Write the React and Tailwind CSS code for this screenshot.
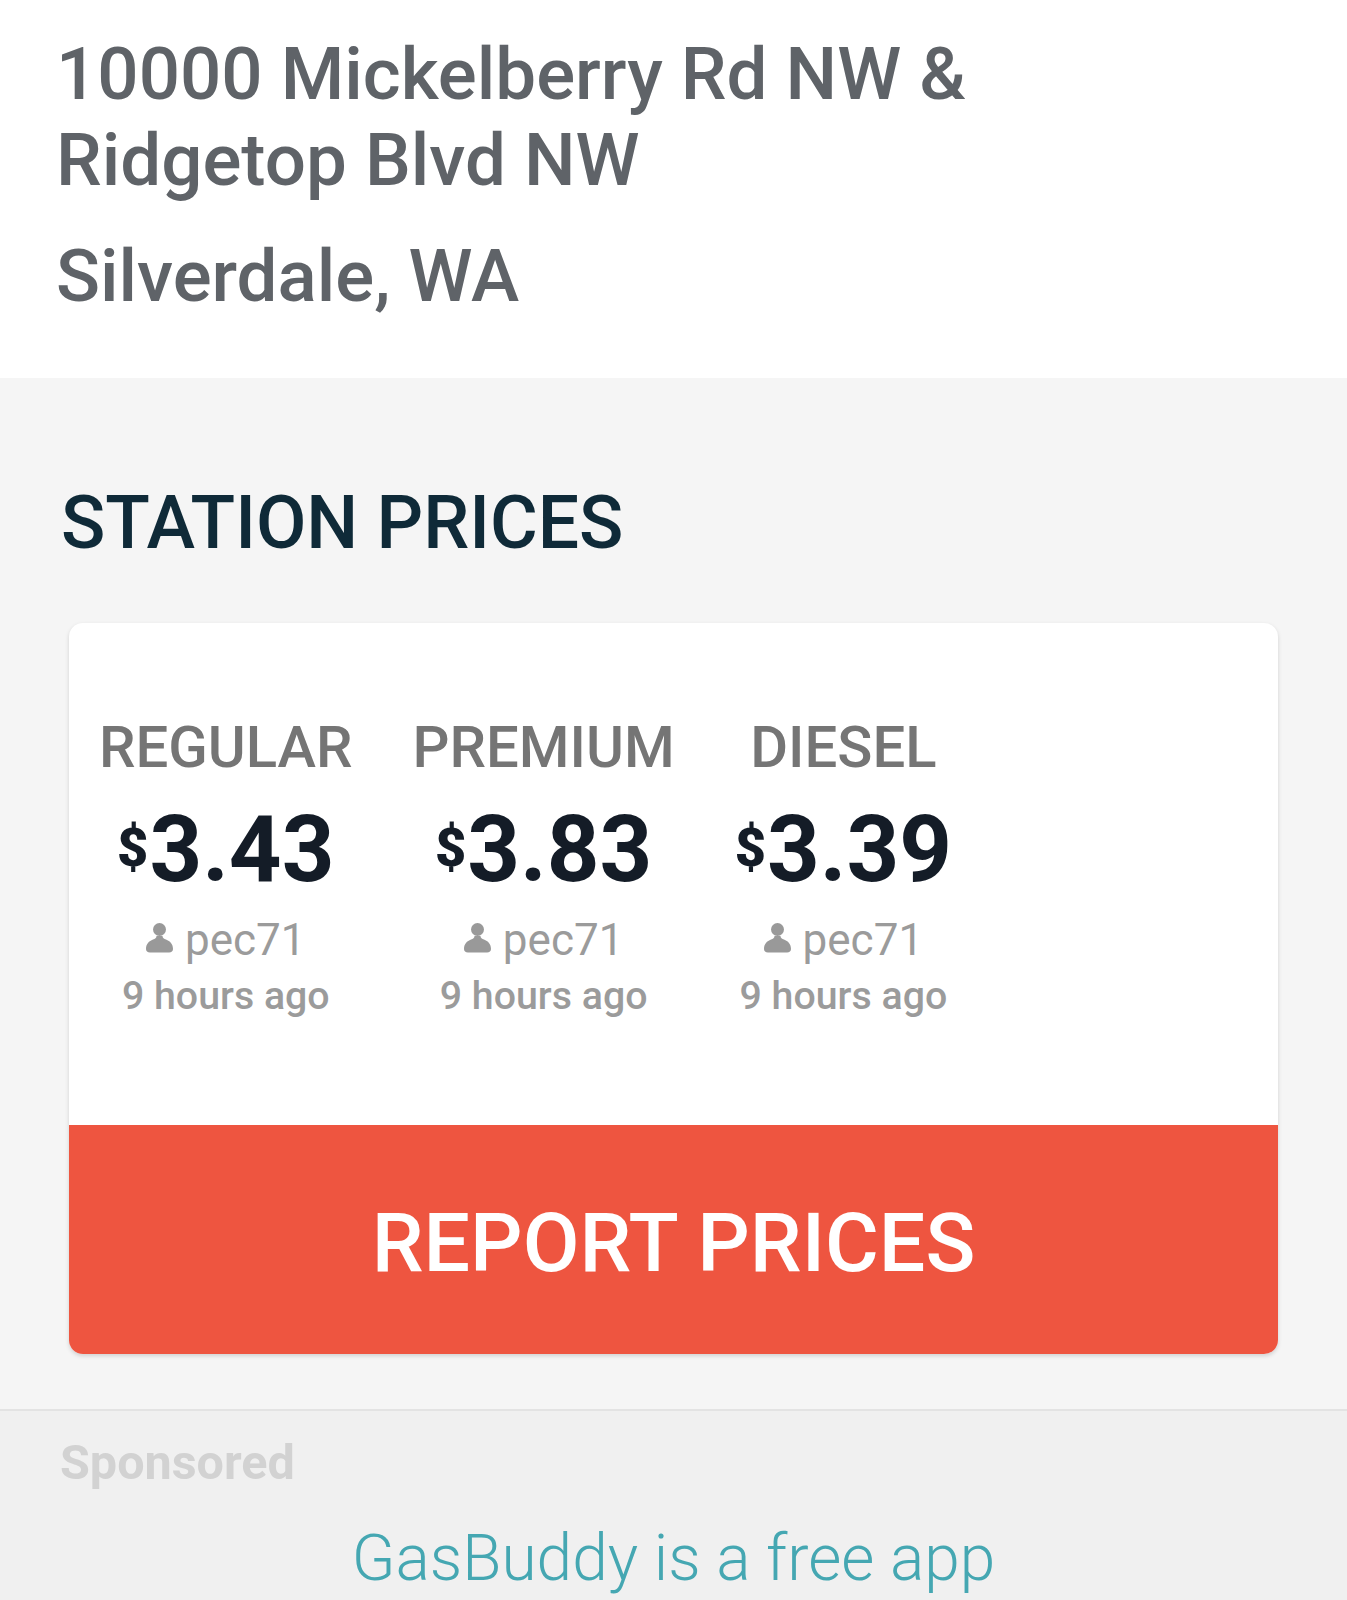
import React from 'react';

const prices = [
  { grade: 'REGULAR', price: '3.43' },
  { grade: 'PREMIUM', price: '3.83' },
  { grade: 'DIESEL', price: '3.39' },
];

const UserIcon = () => (
  <svg width="27" height="30" viewBox="0 0 27 30" fill="#999999" className="mr-[12px] -mt-[5px] shrink-0">
    <circle cx="13.5" cy="6.500" r="6.500" />
    <path d="M0 26c0-5 3-8 7-9.500 2-.8 3.500-1.500 3.500-3.500h6c0 2 1.500 2.700 3.500 3.500 4 1.500 7 4.500 7 9.500 0 2-1.500 3.500-4 3.500H4c-2.500 0-4-1.500-4-3.500z" />
  </svg>
);

const PriceColumn = ({ grade, price }) => (
  <div className="flex flex-col items-center">
    <div className="text-[58px] leading-[60px] font-medium text-[#757575] whitespace-nowrap">{grade}</div>
    <div className="flex items-start mt-[31px] h-[84px] text-[#141c27] font-bold whitespace-nowrap">
      <span className="text-[54px] leading-[42px] mt-[19px] mr-[1px] font-black">$</span>
      <span className="text-[92px] leading-[84px]">{price}</span>
    </div>
    <div className="flex items-center mt-[24px] h-[48px] text-[44px] leading-[48px] text-[#9b9b9b] whitespace-nowrap">
      <UserIcon />
      pec71
    </div>
    <div className="mt-[8px] text-[39.300px] leading-[48px] font-medium text-[#9b9b9b] whitespace-nowrap">9 hours ago</div>
  </div>
);

export default function App() {
  return (
    <div className="w-[1347px] h-[1600px] overflow-hidden bg-[#f5f5f5] font-['Roboto',sans-serif]">
      <div className="h-[378px] bg-white px-[56px] pt-[32px] text-[72.700px] font-medium text-[#5f6368]">
        <div className="leading-[86px]">10000 Mickelberry Rd NW &amp;</div>
        <div className="leading-[86px]">Ridgetop Blvd NW</div>
        <div className="leading-[86px] mt-[30px]">Silverdale, WA</div>
      </div>

      <div className="h-[1031px] px-[69px] pt-[103px]">
        <h2 className="-ml-[8px] text-[73.200px] leading-[84px] font-medium text-[#0f2a38]">STATION PRICES</h2>
        <div className="mt-[58px] w-[1209px] h-[731px] rounded-[14px] bg-white shadow-[0_2px_4px_rgba(0,0,0,0.15)] overflow-hidden flex flex-col">
          <div className="h-[502px] flex gap-[60px] pl-[30px] pt-[94px]">
            {prices.map((p) => (
              <PriceColumn key={p.grade} grade={p.grade} price={p.price} />
            ))}
          </div>
          <div className="flex-1 bg-[#ee5540] flex items-center justify-center pt-[8px] text-white text-[82.400px] font-medium">
            REPORT PRICES
          </div>
        </div>
      </div>

      <div className="h-[191px] bg-[#f0f0f0] border-t-2 border-[#e3e3e3] pl-[60px] pt-[25px]">
        <div className="text-[48.500px] leading-[54px] font-bold text-[#d2d2d2]">Sponsored</div>
        <div className="mt-[31px] -ml-[60px] text-center text-[64px] leading-[76px] font-light text-[#45a7b2]">GasBuddy is a free app</div>
      </div>
    </div>
  );
}
